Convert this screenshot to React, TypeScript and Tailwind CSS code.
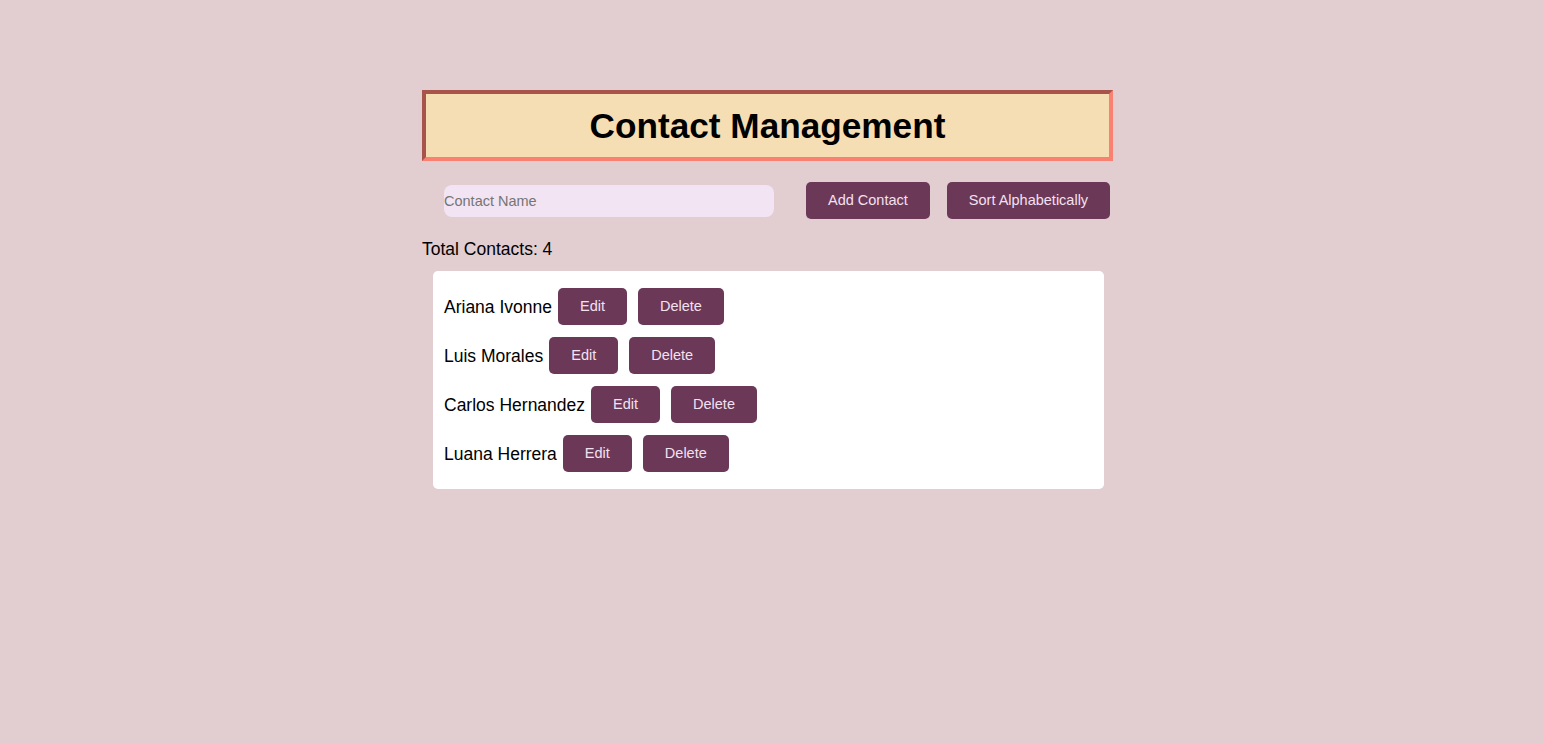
import React from "react";

const contacts = ["Ariana Ivonne", "Luis Morales", "Carlos Hernandez", "Luana Herrera"];

const btn =
  "bg-[#6c3858] text-[#f3e1f0] text-[14.5px] leading-[17px] h-[37px] px-[22px] rounded-[5px] flex items-center";

export default function App() {
  return (
    <div
      className="min-h-[744px] w-full bg-[#e2cdd0] text-black"
      style={{ fontFamily: '"Liberation Sans", Arial, sans-serif' }}
    >
      <div className="ml-[422px] w-[691px] pt-[90px]">
        <div className="border-4 border-t-[#a7554c] border-l-[#a7554c] border-b-[#fa8072] border-r-[#fa8072] bg-[#f5deb3] h-[71px] flex items-center justify-center">
          <h1 className="text-[35.2px] font-bold leading-[40px]">Contact Management</h1>
        </div>

        <div className="flex items-center mt-[21px] h-[37px]">
          <input
            placeholder="Contact Name"
            className="ml-[22px] w-[330px] h-[32px] rounded-[8px] bg-[#f2e4f2] text-[14.5px] outline-none placeholder:text-[#757575]"
          />
          <button className={`${btn} ml-[32px]`}>Add Contact</button>
          <button className={`${btn} ml-[17px] px-[22.5px]`}>Sort Alphabetically</button>
        </div>

        <p className="text-[17.5px] leading-[20px] mt-[20px]">Total Contacts: 4</p>

        <div className="ml-[11px] w-[671px] mt-[12px] bg-white rounded-[5px] px-[11px] py-[17px] flex flex-col gap-[12px]">
          {contacts.map((c) => (
            <div key={c} className="flex items-center">
              <span className="text-[17.5px] leading-[20px]">{c}</span>
              <button className={`${btn} ml-[6px]`}>Edit</button>
              <button className={`${btn} ml-[11px]`}>Delete</button>
            </div>
          ))}
        </div>
      </div>
    </div>
  );
}
